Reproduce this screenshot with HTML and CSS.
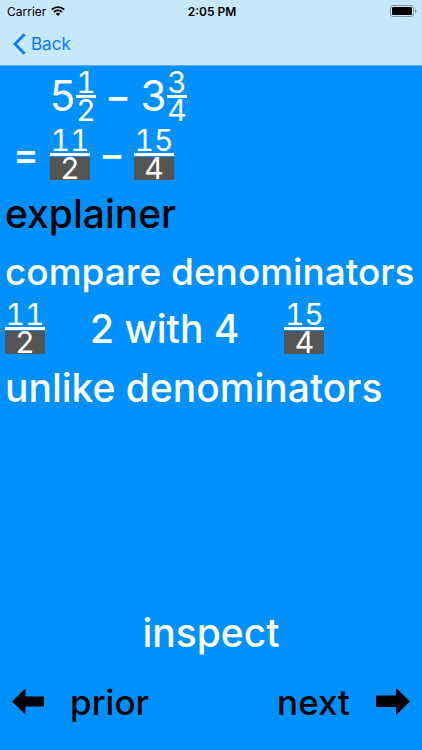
FILE: index.html
```
<!DOCTYPE html>
<html lang="en">
<head>
    <meta charset="UTF-8">
    <meta name="viewport" content="width=device-width, initial-scale=1.0">
    <title>Compare Denominators</title>
    <link rel="stylesheet" href="styles.css">
</head>
<body>
    <header class="top-bar">
        <div class="status-bar">
            <div class="carrier">
                <span>Carrier</span>
                <svg class="wifi" width="14" height="10" viewBox="0 0 14 10" aria-hidden="true">
                    <path d="M0.8 3.7a8.8 8.8 0 0 1 12.4 0M3 6a5.7 5.7 0 0 1 8 0" fill="none" stroke="#000" stroke-width="1.9"/>
                    <path d="M7 10L4.8 7.8a3.1 3.1 0 0 1 4.4 0z"/>
                </svg>
            </div>
            <div class="clock">2:05 PM</div>
            <svg class="battery" width="27" height="12" viewBox="0 0 27 12" aria-hidden="true">
                <rect x="0.5" y="0.5" width="23" height="11" rx="2.6" fill="none" stroke="#7f929d"/>
                <rect x="2" y="2" width="20" height="8" rx="1.2"/>
                <path d="M25 4v4c1-.4 1.5-1.2 1.5-2S26 4.4 25 4z" fill="#7f929d"/>
            </svg>
        </div>
        <nav class="nav-bar">
            <a class="back" href="#">
                <svg width="13" height="22" viewBox="0 0 13 22" aria-hidden="true">
                    <path d="M11.7 1.2L2 11l9.7 9.8" fill="none" stroke="#087aff" stroke-width="2.8"/>
                </svg>
                <span>Back</span>
            </a>
        </nav>
    </header>

    <main class="lesson">
        <div class="equation first">
            <span class="whole">5</span>
            <span class="fraction single"><span class="num">1</span><span class="den">2</span></span>
            <span class="operator">−</span>
            <span class="whole">3</span>
            <span class="fraction single"><span class="num">3</span><span class="den">4</span></span>
        </div>
        <div class="equation second">
            <span class="equals">=</span>
            <span class="fraction marked"><span class="num">11</span><span class="den">2</span></span>
            <span class="operator">−</span>
            <span class="fraction marked"><span class="num">15</span><span class="den">4</span></span>
        </div>

        <h1 class="line title">explainer</h1>
        <p class="line long">compare denominators</p>
        <div class="compare">
            <span class="fraction marked"><span class="num">11</span><span class="den">2</span></span>
            <span>2 with 4</span>
            <span class="fraction marked"><span class="num">15</span><span class="den">4</span></span>
        </div>
        <p class="line">unlike denominators</p>
    </main>

    <footer class="controls">
        <button class="inspect" type="button">inspect</button>
        <div class="steps">
            <button class="step" type="button">
                <svg width="32" height="28" viewBox="0 0 32 28" aria-hidden="true">
                    <path d="M0 13.5L13.5 0.5v8H32v10H13.5v8z"/>
                </svg>
                <span>prior</span>
            </button>
            <button class="step" type="button">
                <span>next</span>
                <svg width="34" height="28" viewBox="0 0 34 28" aria-hidden="true">
                    <path d="M34 13.5L20 0v7.5H0V19h20v8z"/>
                </svg>
            </button>
        </div>
    </footer>
</body>
</html>
```
FILE: styles.css
```
* {
    box-sizing: border-box;
}
body {
    display: flex;
    flex-direction: column;
    min-height: 100vh;
    margin: 0;
    background-color: #0091ff;
    color: #fff;
    font-family: Inter, "Liberation Sans", sans-serif;
    font-size: 39px;
    font-weight: 500;
}
button {
    padding: 0;
    border: none;
    background: none;
    color: inherit;
    font: inherit;
    cursor: pointer;
}

/* header */
.top-bar {
    background-color: #c7e7fa;
    border-bottom: 1px solid #62aee6;
    color: #000;
    font-weight: 400;
}
.status-bar {
    display: grid;
    grid-template-columns: 1fr auto 1fr;
    align-items: center;
    height: 22px;
    padding: 0 5px 0 7px;
    font-size: 12px;
}
.carrier {
    display: flex;
    align-items: center;
    gap: 5px;
}
.clock {
    font-weight: 600;
}
.battery {
    justify-self: end;
}
.nav-bar {
    display: flex;
    align-items: center;
    height: 43px;
    padding: 0 13px;
}
.back {
    display: flex;
    align-items: center;
    gap: 5px;
    color: #087aff;
    font-size: 17px;
    text-decoration: none;
}

/* fractions */
.fraction {
    display: flex;
    flex-direction: column;
    width: 40px;
    font-size: 30px;
    font-weight: 400;
    font-variant-numeric: tabular-nums;
    text-align: center;
}
.single {
    width: 20px;
}
.num {
    line-height: 24px;
    padding-bottom: 1px;
    border-bottom: 3px solid #fff;
}
.den {
    margin-top: 1px;
    line-height: 23px;
}
.marked .den {
    background-color: #555;
}

/* lesson */
.lesson {
    flex: 1;
    padding: 4px 5px 0;
}
.equation {
    display: flex;
    align-items: center;
    height: 52px;
    line-height: 52px;
}
.first {
    padding-left: 44px;
}
.second {
    margin-top: 6px;
    padding-left: 8px;
}
.whole {
    width: 27px;
    font-size: 42px;
    font-weight: 400;
    text-align: center;
}
.operator {
    width: 44px;
    text-align: center;
}
.equals {
    width: 37px;
}
.line {
    margin: 0;
    font-size: 39px;
    font-weight: 500;
    line-height: 58px;
    white-space: nowrap;
}
.title {
    margin-top: 5px;
    color: #000;
}
.long {
    font-size: 37px;
}
.compare {
    display: flex;
    align-items: center;
    gap: 45px;
    height: 52px;
    margin: 1px 0 5px;
}

/* bottom buttons */
.controls {
    padding: 0 12px 18px;
}
.inspect {
    display: block;
    margin: 0 auto 10px;
    line-height: 58px;
}
.steps {
    display: flex;
    justify-content: space-between;
}
.step {
    display: flex;
    align-items: center;
    gap: 26px;
    color: #000;
    font-size: 35px;
    line-height: 60px;
}
```
